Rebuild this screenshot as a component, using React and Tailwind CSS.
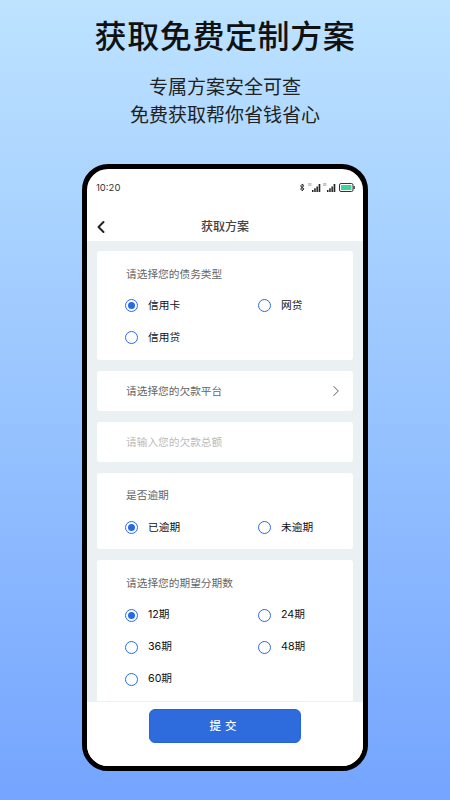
import { ChevronLeft, ChevronRight } from "lucide-react";

const cjk = "font-['Inter','Noto_Sans_CJK_SC',sans-serif]";

function Radio({ label, checked }) {
  return (
    <div className="flex h-[32px] items-center">
      <span className="flex h-[13px] w-[13px] items-center justify-center rounded-full border-[1.5px] border-[#2a6ae0] bg-white">
        {checked && <span className="h-[7px] w-[7px] rounded-full bg-[#2a6ae0]" />}
      </span>
      <span className="ml-[10px] pt-[1px] text-[10.7px] font-normal leading-none text-[#111]">{label}</span>
    </div>
  );
}

function Options({ items, checked }) {
  return (
    <div className="grid grid-cols-[133px_1fr] pl-[28px]">
      {items.map((item) => (
        <Radio key={item} label={item} checked={item === checked} />
      ))}
    </div>
  );
}

function SectionTitle({ children }) {
  return <p className="pl-[29px] pt-[1px] text-[10.7px] leading-none text-[#666]">{children}</p>;
}

function StatusIcons() {
  return (
    <div className="flex items-center gap-[2px]">
      <svg className="mr-[1px]" width="6" height="9" viewBox="0 0 6 9" fill="none" stroke="#333" strokeWidth="1">
        <path d="M1 2.500l4 3.400L3 8V1l2 1.600L1 6.500" />
      </svg>
      <Signal />
      <Signal />
      <svg className="ml-[1px]" width="16" height="9" viewBox="0 0 16 9">
        <rect x="0.5" y="0.5" width="13.500" height="8" rx="1.500" fill="none" stroke="#333" strokeWidth="1" />
        <rect x="2" y="2" width="10.500" height="5" rx="0.500" fill="#3ed598" />
        <rect x="14.500" y="3" width="1.300" height="3" fill="#333" />
      </svg>
    </div>
  );
}

function Signal() {
  return (
    <svg width="13" height="9" viewBox="0 0 13 9">
      <path d="M4 9h1.500V7H4zM6.200 9h1.500V5.200H6.200zM8.400 9h1.500V3.400H8.400zM10.600 9h1.700V1h-1.700z" fill="#222" />
      <path d="M0 2.200h3.500M0 .800h3.500" stroke="#888" strokeWidth="0.700" />
    </svg>
  );
}

export default function App() {
  return (
    <div className={`${cjk} flex h-[800px] w-[450px] flex-col items-center overflow-hidden bg-gradient-to-b from-[#bde3ff] to-[#75a4ff]`}>
      <h1 className="mt-[15px] text-[32px] font-medium leading-[44px] tracking-[0.6px] text-[#111]">获取免费定制方案</h1>
      <p className="mt-[15px] text-[19px] leading-[28px] text-[#222]">专属方案安全可查</p>
      <p className="text-[19px] leading-[28px] text-[#222]">免费获取帮你省钱省心</p>

      <div className="mt-[34px] flex h-[607px] w-[286px] flex-col overflow-hidden rounded-[26px] border-[5px] border-black bg-white">
        <div className="flex h-[35px] items-end justify-between pl-[9px] pr-[8px] pb-[12px]">
          <span className="text-[9.500px] leading-none text-[#333]">10:20</span>
          <StatusIcons />
        </div>
        <div className="relative flex h-[37px] items-center justify-center pt-[8px]">
          <ChevronLeft className="absolute left-[4px] h-[20px] w-[20px] text-[#222]" strokeWidth={2.4} />
          <span className="text-[12px] font-medium text-[#444]">获取方案</span>
        </div>

        <div className="flex min-h-0 flex-1 flex-col gap-[11px] overflow-hidden bg-[#ebf0f2] px-[10px] pt-[10px]">
          <section className="shrink-0 rounded-[3px] bg-white pt-[18px] pb-[6px]">
            <SectionTitle>请选择您的债务类型</SectionTitle>
            <div className="mt-[9px]">
              <Options items={["信用卡", "网贷", "信用贷"]} checked="信用卡" />
            </div>
          </section>

          <div className="flex h-[40px] shrink-0 items-center justify-between rounded-[3px] bg-white pr-[8px]">
            <div className="pt-[3px]">
              <SectionTitle>请选择您的欠款平台</SectionTitle>
            </div>
            <ChevronRight className="h-[18px] w-[18px] text-[#777]" strokeWidth={1.4} />
          </div>

          <div className="flex h-[40px] shrink-0 items-center rounded-[3px] bg-white pl-[29px] pt-[2px] text-[10.7px] text-[#bbb]">
            请输入您的欠款总额
          </div>

          <section className="shrink-0 rounded-[3px] bg-white pt-[17px] pb-[6px]">
            <SectionTitle>是否逾期</SectionTitle>
            <div className="mt-[10px]">
              <Options items={["已逾期", "未逾期"]} checked="已逾期" />
            </div>
          </section>

          <section className="flex-1 rounded-t-[3px] bg-white pt-[18px]">
            <SectionTitle>请选择您的期望分期数</SectionTitle>
            <div className="mt-[9px]">
              <Options items={["12期", "24期", "36期", "48期", "60期"]} checked="12期" />
            </div>
          </section>
        </div>

        <div className="flex h-[65px] shrink-0 justify-center border-t border-[#eef1f3] bg-white pt-[7px]">
          <button className="h-[34px] w-[152px] rounded-[6px] border border-[#2663d8] bg-[#2e6bdc] pt-[1px] text-[11.500px] font-medium tracking-[4px] text-white">
            提交
          </button>
        </div>
      </div>
    </div>
  );
}
